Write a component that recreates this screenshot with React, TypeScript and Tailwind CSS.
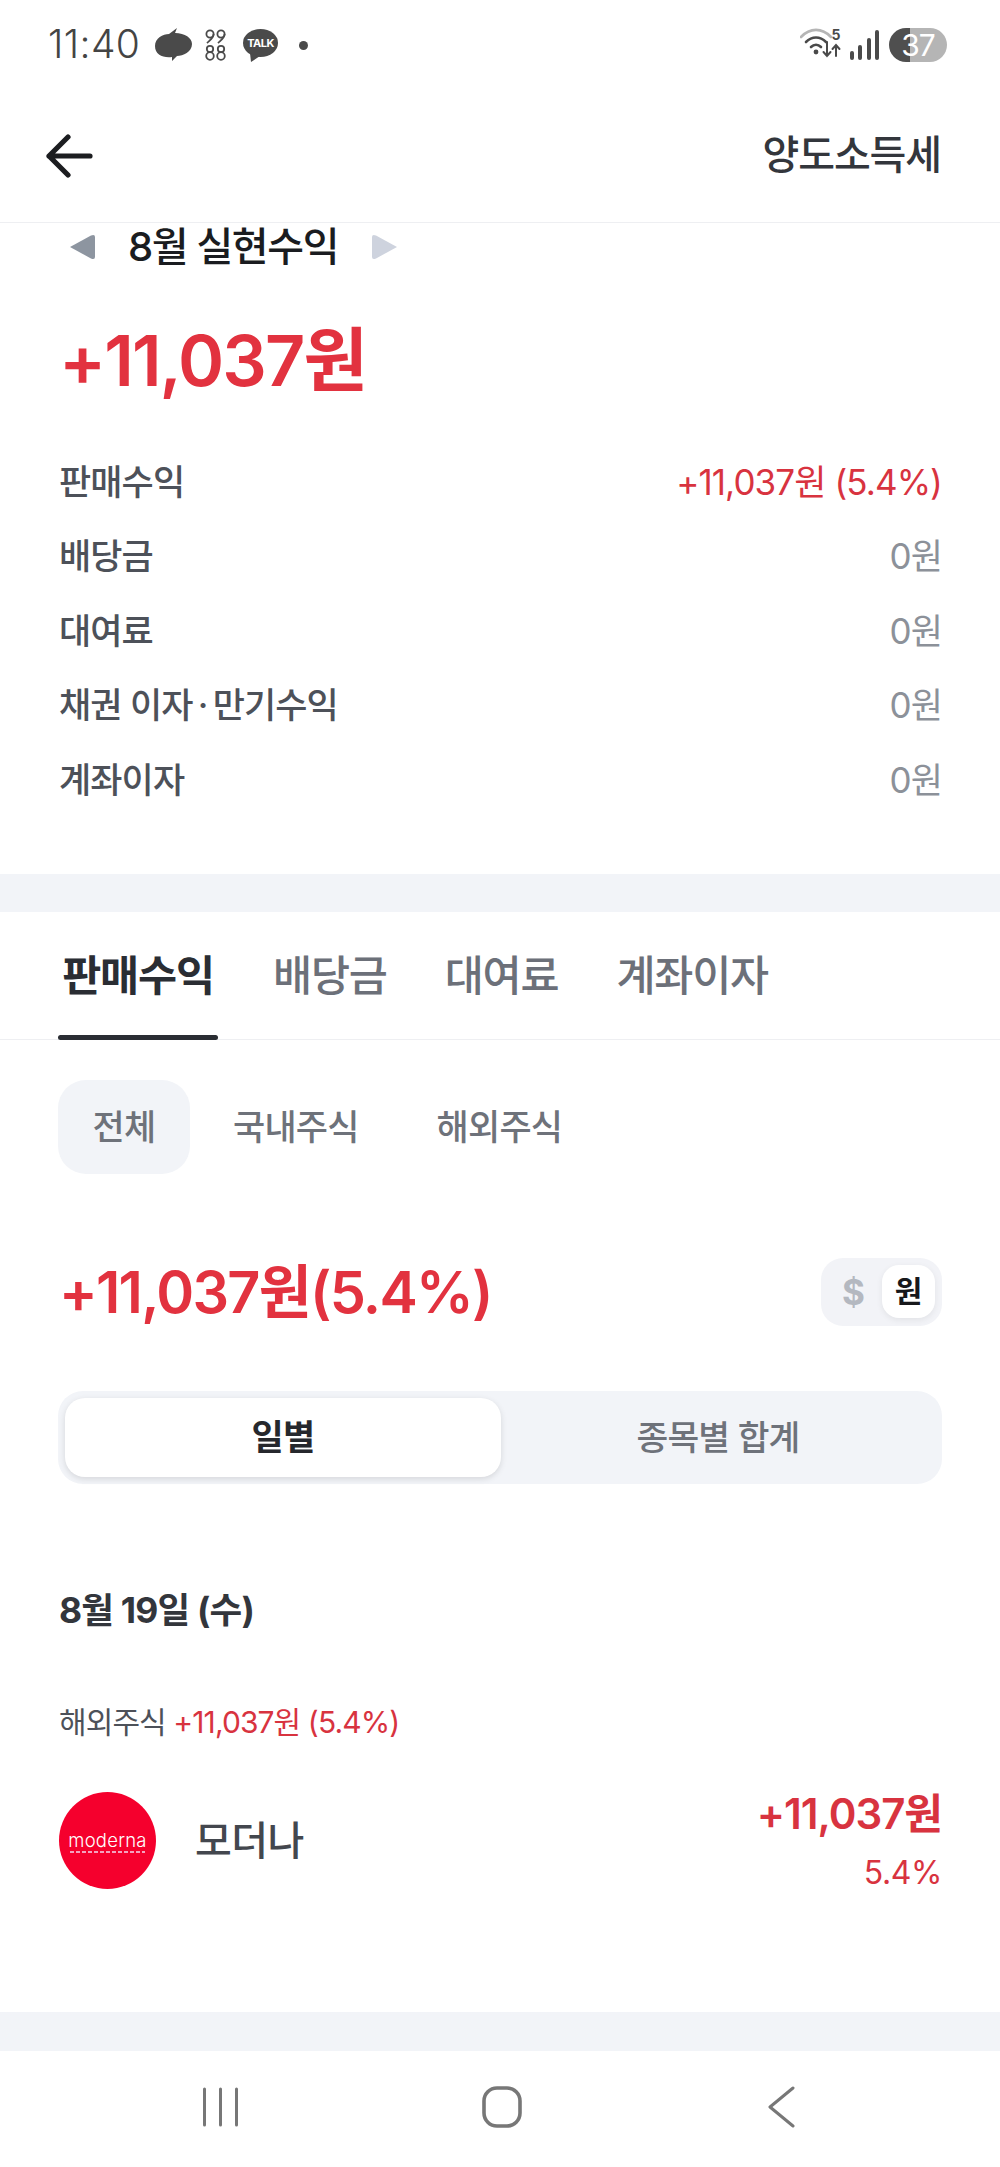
const FONT = "[font-family:Inter,'Noto_Sans_CJK_KR',sans-serif]";

const rows = [
  { label: "판매수익", value: "+11,037원 (5.4%)", red: true },
  { label: "배당금", value: "0원" },
  { label: "대여료", value: "0원" },
  { label: "채권 이자\u2009·\u2009만기수익", value: "0원" },
  { label: "계좌이자", value: "0원" },
];

function StatusBar() {
  return (
    <div className="flex h-[90px] items-center justify-between pl-[48px] pr-[53px] pb-[1px]">
      <div className="flex items-center">
        <span className="w-[92px] text-[39px] font-light tracking-[0.4px] text-[#444]">11:40</span>
        {/* 앱 알림 아이콘 */}
        <svg width="37" height="34" viewBox="0 0 37 34" className="ml-[15px]">
          <path d="M0 18C0 10 8 6 14 6L22 0L20 5C30 5 37 10 37 16C37 24 28 28 22 28L17 33L17 29C8 30 0 27 0 18Z" fill="#4a4a4a" />
        </svg>
        <svg width="24" height="34" viewBox="0 0 24 34" className="ml-[12px]" fill="none" stroke="#4a4a4a" strokeWidth="1.8">
          <circle cx="6" cy="6" r="3.6" />
          <path d="M9.6 6C9.6 10 6 12 3 15" />
          <circle cx="17" cy="6" r="3.6" />
          <path d="M20.6 6C20.6 10 17 12 14 15" />
          <circle cx="6" cy="21" r="3.2" />
          <circle cx="6" cy="28" r="3.8" />
          <circle cx="17" cy="21" r="3.2" />
          <circle cx="17" cy="28" r="3.8" />
        </svg>
        <div className="relative ml-[15px] h-[32px] w-[35px]">
          <svg width="35" height="33" viewBox="0 0 35 33" className="absolute inset-0">
            <ellipse cx="17.5" cy="14" rx="17.5" ry="14" fill="#4a4a4a" />
            <path d="M7 24L8 33L17 27Z" fill="#4a4a4a" />
          </svg>
          <span className="absolute left-0 top-[7px] w-full text-center text-[11px] leading-[14px] font-bold tracking-[-0.5px] text-white">TALK</span>
        </div>
        <div className="ml-[21px] mt-[2px] size-[9px] rounded-full bg-[#4a4a4a]" />
      </div>
      <div className="flex items-center">
        <svg width="44" height="34" viewBox="0 0 44 34" fill="none" strokeLinecap="round">
          <path d="M1 9C10 -0.5 22 -0.5 31 9" stroke="#b5b5b5" strokeWidth="2.6" />
          <path d="M6 14C12 8 20 8 26 14" stroke="#4a4a4a" strokeWidth="2.6" />
          <path d="M11 19C14 16 18 16 21 19" stroke="#4a4a4a" strokeWidth="2.6" />
          <circle cx="16" cy="24" r="2.4" fill="#4a4a4a" />
          <path d="M27 14V28M23.5 24L27 28L30.5 24" stroke="#4a4a4a" strokeWidth="2" />
          <path d="M36 28V17M32.5 21L36 17L39.5 21" stroke="#4a4a4a" strokeWidth="2" />
        </svg>
        <span className="ml-[-12px] mt-[-20px] w-[10px] text-[14px] leading-[14px] font-bold text-[#4a4a4a]">5</span>
        <div className="ml-[8px] flex h-[30px] items-end gap-[4.5px]">
          <div className="h-[9px] w-[4px] rounded-full bg-[#4a4a4a]" />
          <div className="h-[15px] w-[4px] rounded-full bg-[#4a4a4a]" />
          <div className="h-[22px] w-[4px] rounded-full bg-[#4a4a4a]" />
          <div className="h-[30px] w-[4px] rounded-full bg-[#4a4a4a]" />
        </div>
        <div className="ml-[10px] flex h-[34px] w-[58px] items-center justify-center rounded-full bg-[linear-gradient(90deg,#4f4f4f_21px,#b5b5b5_21px)] text-[30px] leading-[34px] tracking-[-1px] text-white">
          37
        </div>
      </div>
    </div>
  );
}

function Header() {
  return (
    <div className="flex h-[133px] items-center justify-between border-b border-[#eeeff2] pl-[45px] pr-[59px]">
      <svg width="48" height="44" viewBox="0 0 48 44" fill="none" stroke="#1c1d20" strokeWidth="5.2" strokeLinecap="round" strokeLinejoin="round">
        <path d="M45 22H4M23 3L4 22L23 41" />
      </svg>
      <span className="mb-[3px] text-[40px] font-medium tracking-[-1.1px] text-[#33363c]">양도소득세</span>
    </div>
  );
}

function Summary() {
  return (
    <div className="pl-[59px] pr-[58px]">
      <div className="flex h-[44px] items-center pl-[9px] pt-[4px]">
        <svg width="28" height="30" viewBox="0 0 28 30">
          <path d="M2 15L23 3.5Q27 2 27 5V25Q27 28 23 26.5Z" fill="#8d95a0" />
        </svg>
        <span className="ml-[32px] text-[40px] font-medium tracking-[-1.4px] text-[#1a1c20]">8월 실현수익</span>
        <svg width="28" height="30" viewBox="0 0 28 30" className="ml-[33px]">
          <path d="M26 15L5 3.5Q1 2 1 5V25Q1 28 5 26.5Z" fill="#ced3de" />
        </svg>
      </div>
      <div className="mt-[54px] text-[70px] leading-[80px] font-semibold tracking-[-1.9px] text-[#e2323f]">+11,037원</div>
      <div className="mt-[44px] flex flex-col">
        {rows.map((r) => (
          <div key={r.label} className="flex h-[74.4px] items-center justify-between text-[35px] tracking-[-0.9px]">
            <span className="font-medium text-[#4d5159]">{r.label}</span>
            <span className={r.red ? "text-[#d8333f]" : "text-[#8c9199]"}>{r.value}</span>
          </div>
        ))}
      </div>
    </div>
  );
}

function Tabs() {
  const tabs = ["판매수익", "배당금", "대여료", "계좌이자"];
  return (
    <div className="flex h-[128px] gap-[58px] border-b border-[#eeeff2] px-[58px]">
      {tabs.map((t, i) => (
        <div key={t} className={i === 0 ? "relative mr-[-3px] flex w-[160px] items-center justify-center text-[42.5px] font-bold tracking-[-1.2px] text-[#2a2d33]" : "flex items-center text-[42.5px] font-medium tracking-[-1.2px] text-[#6c7079]"}>
          {t}
          {i === 0 && <div className="absolute inset-x-0 bottom-[-1px] h-[5px] rounded-full bg-[#2a2d33]" />}
        </div>
      ))}
    </div>
  );
}

function Pills() {
  return (
    <div className="mt-[40px] flex h-[94px] items-center px-[58px] text-[35px] font-medium tracking-[-0.8px] text-[#6e727a]">
      <div className="flex h-full w-[132px] items-center justify-center rounded-[28px] bg-[#f2f4f8]">전체</div>
      <span className="ml-[43px]">국내주식</span>
      <span className="ml-[78px]">해외주식</span>
    </div>
  );
}

function SumRow() {
  return (
    <div className="mt-[83px] flex h-[70px] items-center justify-between pl-[59px] pr-[58px]">
      <span className="text-[57.5px] font-semibold tracking-[-1.7px] text-[#e2323f]">+11,037원(5.4%)</span>
      <div className="flex h-[68px] w-[121px] items-center justify-end rounded-[22px] bg-[#f2f3f7] pr-[7px]">
        <span className="mr-[17px] text-[35px] font-bold text-[#b4b8c0]">$</span>
        <div className="flex size-[53px] items-center justify-center rounded-[17px] bg-white text-[30px] font-bold text-[#17181b] shadow-[0_2px_6px_rgba(0,0,0,0.07)]">원</div>
      </div>
    </div>
  );
}

function Segmented() {
  return (
    <div className="mx-[58px] mt-[64px] flex h-[93px] rounded-[25px] bg-[#f2f4f8] p-[7px]">
      <div className="flex h-[79px] w-[436px] items-center justify-center rounded-[20px] bg-white text-[35px] font-semibold tracking-[-0.8px] text-[#26282d] shadow-[0_2px_6px_rgba(0,0,0,0.12)]">일별</div>
      <div className="flex flex-1 items-center justify-center text-[34.5px] font-medium tracking-[-0.8px] text-[#6e727a]">종목별 합계</div>
    </div>
  );
}

function Trades() {
  return (
    <div className="pl-[59px] pr-[58px]">
      <div className="mt-[105px] text-[35.5px] leading-[44px] font-bold tracking-[-0.8px] text-[#33363c]">8월 19일 (수)</div>
      <div className="mt-[67px] text-[30px] leading-[44px] tracking-[-0.9px] text-[#4d5159]">
        해외주식 <span className="text-[#d8333f]">+11,037원 (5.4%)</span>
      </div>
      <div className="mt-[47px] flex h-[100px] items-center">
        <div className="flex size-[97px] shrink-0 flex-col items-center justify-center rounded-full bg-[#f5002d] pt-[1px]">
          <span className="text-[18.5px] leading-[20px] font-light tracking-[0.2px] text-white [font-family:Inter,sans-serif]">moderna</span>
          <div className="mt-[1px] h-[2px] w-[75px] bg-[repeating-linear-gradient(90deg,#f3a3c0_0,#f3a3c0_4px,transparent_4px,transparent_6px)]" />
        </div>
        <span className="ml-[39px] text-[40px] font-medium tracking-[-0.6px] text-[#43474e]">모더나</span>
        <div className="ml-auto flex flex-col items-end">
          <span className="text-[42px] leading-[50px] font-semibold tracking-[-1px] text-[#d8333f]">+11,037원</span>
          <span className="mt-[14px] text-[32px] leading-[40px] tracking-[-0.4px] text-[#d8333f]">5.4%</span>
        </div>
      </div>
    </div>
  );
}

function NavBar() {
  return (
    <div className="flex h-[117px] items-center pb-[4px] pl-[201px]">
      <svg width="40" height="40" viewBox="0 0 40 40" fill="none" stroke="#777" strokeWidth="3" strokeLinecap="round">
        <path d="M3.5 2V38M19.5 2V38M35.5 2V38" />
      </svg>
      <svg width="40" height="42" viewBox="0 0 40 42" className="ml-[241px]" fill="none" stroke="#777" strokeWidth="3.6">
        <rect x="2" y="2" width="36" height="38" rx="13" />
      </svg>
      <svg width="30" height="42" viewBox="0 0 30 42" className="ml-[245px]" fill="none" stroke="#777" strokeWidth="3" strokeLinecap="round" strokeLinejoin="round">
        <path d="M26 2L3 21L26 40" />
      </svg>
    </div>
  );
}

export default function App() {
  return (
    <div className={`${FONT} h-[2167px] w-[1000px] overflow-hidden bg-white`}>
      <StatusBar />
      <Header />
      <Summary />
      <div className="mt-[57px] h-[38px] bg-[#f2f4f8]" />
      <Tabs />
      <Pills />
      <SumRow />
      <Segmented />
      <Trades />
      <div className="mt-[121px] h-[39px] bg-[#f2f4f8]" />
      <NavBar />
    </div>
  );
}
